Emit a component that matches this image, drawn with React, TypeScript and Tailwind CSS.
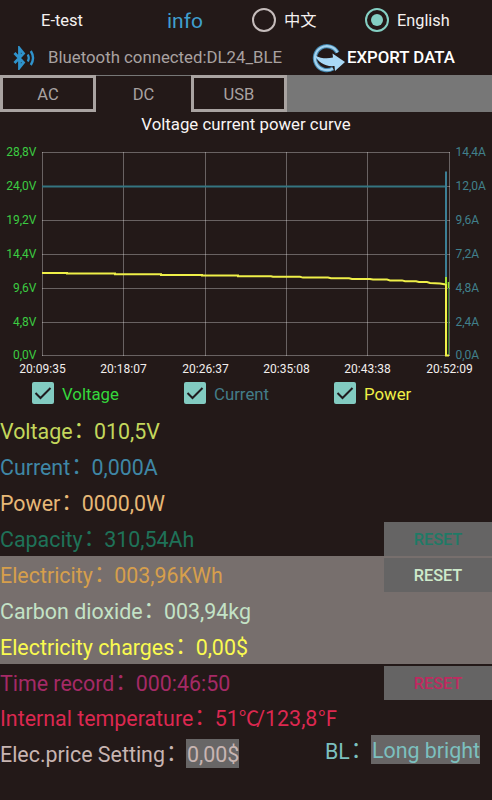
import clsx from 'clsx'

const tabs = ['AC', 'DC', 'USB']

const voltTicks = ['28,8V', '24,0V', '19,2V', '14,4V', '9,6V', '4,8V', '0,0V']
const ampTicks  = ['14,4A', '12,0A', '9,6A', '7,2A', '4,8A', '2,4A', '0,0A']
const timeTicks = ['20:09:35', '20:18:07', '20:26:37', '20:35:08', '20:43:38', '20:52:09']

const gridX = [42.5, 123.5, 205.5, 286.5, 367.5, 449.5]
const gridY = [15.5, 49.5, 83.5, 117.5, 151.5, 185.5, 218.5]

const readings = [
  { label: 'Voltage', value: '010,5V', color: 'text-[#c3d75c]' },
  { label: 'Current', value: '0,000A', color: 'text-[#3f87a6]' },
  { label: 'Power', value: '0000,0W', color: 'text-[#e6b877]' },
  { label: 'Capacity', value: '310,54Ah', color: 'text-[#1f7258]', reset: 'text-[#1f7a66]' },
  { label: 'Electricity', value: '003,96KWh', color: 'text-[#d69f4c]', reset: 'text-[#cdeacb]', lit: true },
  { label: 'Carbon dioxide', value: '003,94kg', color: 'text-[#c3e2c6]', lit: true },
  { label: 'Electricity charges', value: '0,00$', color: 'text-[#fafa50]', lit: true },
  { label: 'Time record', value: '000:46:50', color: 'text-[#a52a66]', reset: 'text-[#c02a60]' },
  { label: 'Internal temperature', value: '51℃/123,8℉', color: 'text-[#dc2850]' },
]

function BluetoothIcon() {
  return (
    <svg width="22" height="24" viewBox="0 0 22 24" fill="none" stroke="#2f93cc">
      <path d="M1.5 7l9 9.500-4 5V2.500l4 5L1.500 17" strokeWidth="2.800" />
      <path d="M14.800 8.500q2 3.500 0 7" strokeWidth="2.200" />
      <path d="M17.800 5q4.500 7 0 14" strokeWidth="2.400" />
    </svg>
  )
}

function ExportIcon() {
  return (
    <svg width="35" height="30" viewBox="0 0 35 30" fill="none" className="-ml-px">
      <path d="M26.500 9.500A12 12 0 1 0 22 25.500" stroke="#4588b0" strokeWidth="4.200" />
      <path d="M26.500 9.500A12 12 0 1 0 22 25.500" stroke="#a3d2ee" strokeWidth="2.200" />
      <path d="M4 12.500C10 15.500 16 16 22 14.500L21.500 10.500L34 19L24 28L23.500 23C14 24 7 19 4 12.500z" fill="#a9d8f5" />
    </svg>
  )
}

function Radio({ label, checked }: { label: string; checked?: boolean }) {
  return (
    <div className="flex items-center gap-2">
      <span className={clsx('flex size-6 items-center justify-center rounded-full border-[2px]', checked ? 'border-[#84cfc3]' : 'border-[#c5bcbb]')}>
        {checked && <span className="size-3 rounded-full bg-[#84cfc3]" />}
      </span>
      <span className="pt-[2px] text-[16.3px] text-[#f5f1f0]">{label}</span>
    </div>
  )
}

function Check({ label, color }: { label: string; color: string }) {
  return (
    <div className="flex items-center gap-[8px]">
      <svg width="22" height="22" viewBox="0 0 22 22" className="-mt-[3px]">
        <rect width="22" height="22" rx="2" fill="#82cbc1" />
        <path d="M3.500 11l5 5L18.500 6" fill="none" stroke="#1f1b1f" strokeWidth="2" />
      </svg>
      <span className={clsx('text-[16.8px]', color)}>{label}</span>
    </div>
  )
}

function Chart() {
  return (
    <svg width="492" height="240" viewBox="0 0 492 240" className="block">
      <g stroke="#ffffff" strokeOpacity="0.32" strokeWidth="1">
        {gridX.map((x) => <path key={x} d={`M${x} 15V219`} />)}
        {gridY.map((y) => <path key={y} d={`M42 ${y}H450`} />)}
      </g>
      <path d="M42 49.500H446" stroke="#347480" strokeWidth="2.200" />
      <path d="M446 34.500V218" stroke="#3c7f95" strokeWidth="2" />
      <path d="M448.500 151V218" stroke="#2c7a2c" strokeWidth="1" />
      <g fill="none" stroke="#efef48" strokeWidth="2">
        <path d="M42 136H67V136.600H115V137.200H161V138H202V138.600H238V139.200H271L273 139.800H300L303 140.600H328L331 141.200H349L352 142H370L373 142.600H387L390 143.400H402L405 144.200H416L419 145H427L430 146L440 146.500L446 147.500" />
        <path d="M446 140V218.500H449" />
      </g>
      <path d="M446 140V147M448.500 145V151" stroke="#8be22e" strokeWidth="1.500" />
      <g fontSize="12" fill="#3ccc42" textAnchor="end">
        {voltTicks.map((t, i) => <text key={t} x="36.500" y={gridY[i] + 3.5}>{t}</text>)}
      </g>
      <g fontSize="12" fill="#41808c">
        {ampTicks.map((t, i) => <text key={t} x="455.500" y={gridY[i] + 3.5}>{t}</text>)}
      </g>
      <g fontSize="12" fill="#f2eeed" textAnchor="middle">
        {timeTicks.map((t, i) => <text key={t} x={gridX[i]} y="235.500">{t}</text>)}
      </g>
    </svg>
  )
}

// full-width colon, raised to the middle of the line
function Colon() {
  return <span className="inline-block -translate-y-[2px] translate-x-px">：</span>
}

// the degree glyphs are set wide by default, pull in what follows them
function Value({ text }: { text: string }) {
  return text.split(/([℃℉])/).map((part, i) => (
    <span key={i} className={i % 2 ? 'tracking-[-3px] text-[20.5px]' : undefined}>{part}</span>
  ))
}

export default function App() {
  return (
    <div className="flex h-[800px] w-[492px] flex-col overflow-hidden bg-[#231918] font-[Roboto,'Noto_Sans_CJK_SC',sans-serif] whitespace-nowrap">
      <div className="flex h-10 shrink-0 items-center">
        <span className="w-[126px] pt-[2px] pl-[41px] text-[16.5px] text-[#f5f1f0]">E-test</span>
        <span className="w-[126px] pt-[3px] pl-[41px] text-[21px] text-[#3f9fce]">info</span>
        <div className="w-[113px]"><Radio label="中文" /></div>
        <Radio label="English" checked />
      </div>

      <div className="flex h-[35px] shrink-0 items-center">
        <div className="w-[48px] pl-[13px]"><BluetoothIcon /></div>
        <span className="w-[264px] pt-px text-[16.8px] text-[#a9a2a1]">Bluetooth connected:DL24_BLE</span>
        <ExportIcon />
        <span className="pt-px pl-px text-[16.8px] font-medium text-white">EXPORT DATA</span>
      </div>

      <div className="flex h-[37px] shrink-0 bg-[#777777]">
        {tabs.map((tab) => (
          <div key={tab}
            className={clsx('flex items-center justify-center bg-[#231918] pt-[3px] text-[16.5px] text-[#a9a2a1]',
              tab === 'DC' ? 'mt-px w-[95px]' : 'w-24 border-[3px] border-[#a9a3a1]')}>
            {tab}
          </div>
        ))}
      </div>

      <div className="h-[25px] shrink-0 text-center text-[16.8px] leading-[25px] text-[#f8f5f4]">Voltage current power curve</div>
      <Chart />

      <div className="flex h-[35px] shrink-0 items-center pl-8">
        <div className="w-[152px]"><Check label="Voltage" color="text-[#35d83c]" /></div>
        <div className="w-[150px]"><Check label="Current" color="text-[#437d89]" /></div>
        <Check label="Power" color="text-[#f0f046]" />
      </div>

      {readings.map((r) => (
        <div key={r.label} className={clsx('flex h-9 shrink-0 items-center justify-between', r.lit && 'bg-[#776f6d]')}>
          <span className={clsx('pt-[2px] text-[21.4px] leading-[33px]', r.color)}>{r.label}<Colon /><Value text={r.value} /></span>
          {r.reset && (
            <span className={clsx('mt-px flex h-[34px] w-[108px] items-center justify-center bg-[#656464] pt-[3px] text-[16.3px] font-medium', r.reset)}>
              RESET
            </span>
          )}
        </div>
      ))}

      <div className="flex h-9 shrink-0 text-[21.4px]">
        <span className="w-[186px] leading-[38px] text-[#c8b5b2]">Elec.price Setting<Colon /></span>
        <span className="mt-[3px] h-[29px] w-[53px] bg-[#686666] pl-px leading-[31px] text-[#c8b5b2]">0,00$</span>
        <span className="ml-[86px] w-[46px] leading-[31px] text-[#7cc0bf]">BL<Colon /></span>
        <span className="-mt-px h-[29px] w-[109px] bg-[#686666] pl-px leading-[32px] text-[#7cc0bf]">Long bright</span>
      </div>
    </div>
  )
}
